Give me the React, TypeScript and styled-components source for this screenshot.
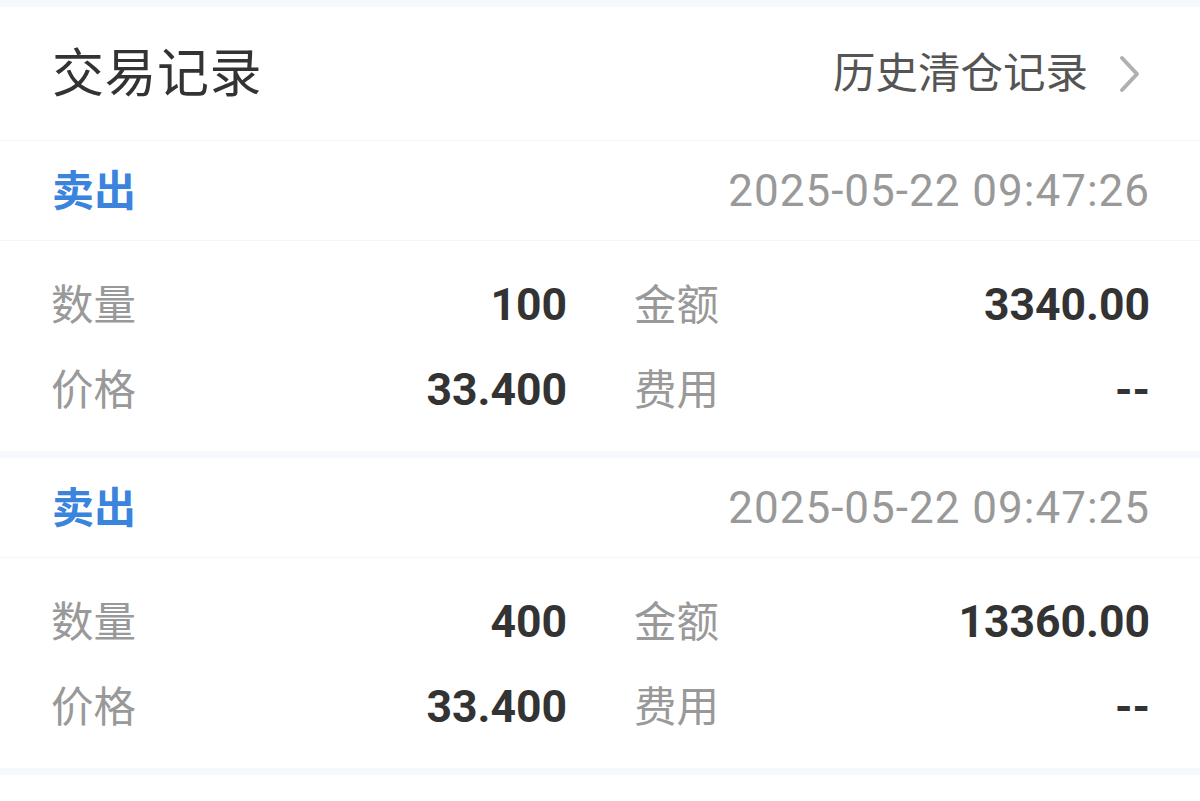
import styled, { createGlobalStyle } from "styled-components";

type Trade = {
  side: string;
  time: string;
  quantity: string;
  amount: string;
  price: string;
  fee: string;
};

const trades: Trade[] = [
  {
    side: "卖出",
    time: "2025-05-22 09:47:26",
    quantity: "100",
    amount: "3340.00",
    price: "33.400",
    fee: "--",
  },
  {
    side: "卖出",
    time: "2025-05-22 09:47:25",
    quantity: "400",
    amount: "13360.00",
    price: "33.400",
    fee: "--",
  },
];

const GlobalStyle = createGlobalStyle`
  html, body {
    margin: 0;
    padding: 0;
    background: #ffffff;
  }
  body {
    font-family: "Noto Sans CJK SC", "Noto Sans", sans-serif;
  }
`;

const Field = ({ label, value }: { label: string; value: string }) => (
  <FieldCell>
    <Label>{label}</Label>
    <Value>{value}</Value>
  </FieldCell>
);

const TradeCard = ({ trade }: { trade: Trade }) => (
  <Card>
    <SideRow>
      <Side>{trade.side}</Side>
      <Time>{trade.time}</Time>
    </SideRow>
    <Details>
      <Field label="数量" value={trade.quantity} />
      <Field label="金额" value={trade.amount} />
      <Field label="价格" value={trade.price} />
      <Field label="费用" value={trade.fee} />
    </Details>
  </Card>
);

const App = () => {
  return (
    <>
      <GlobalStyle />
      <Page>
        <Header>
          <Title>交易记录</Title>
          <HistoryLink>
            <span>历史清仓记录</span>
            <svg width="24" height="38" viewBox="0 0 24 38" fill="none">
              <polyline
                points="4,3 19,19 4,35"
                stroke="#b0b0b0"
                strokeWidth="4"
                strokeLinecap="round"
                strokeLinejoin="round"
              />
            </svg>
          </HistoryLink>
        </Header>
        {trades.map((trade) => (
          <TradeCard key={trade.time} trade={trade} />
        ))}
      </Page>
    </>
  );
};

const Page = styled.div`
  border-top: 7px solid #f5f8fd;
`;

const Header = styled.div`
  height: 133px;
  padding: 0 52px;
  display: flex;
  align-items: center;
  justify-content: space-between;
  border-bottom: 1px solid #f6f6f6;
`;

const Title = styled.div`
  font-size: 52px;
  line-height: 1;
  color: #333333;
  letter-spacing: 0.5px;
  margin-bottom: 8px;
`;

const HistoryLink = styled.div`
  display: flex;
  align-items: center;
  gap: 30px;
  font-size: 42.5px;
  line-height: 1;
  color: #555555;
  margin-right: 6px;

  span {
    margin-bottom: 6px;
  }
`;

const Card = styled.div`
  border-bottom: 7px solid #f5f8fd;
`;

const SideRow = styled.div`
  height: 99px;
  padding: 0 52px;
  display: flex;
  align-items: center;
  justify-content: space-between;
  border-bottom: 1px solid #f6f6f6;
`;

const Side = styled.div`
  font-size: 42px;
  font-weight: 700;
  line-height: 1;
  color: #3a84de;
  margin-bottom: 6px;
`;

const Time = styled.div`
  font-family: Roboto, "Noto Sans", sans-serif;
  font-size: 44px;
  line-height: 1;
  letter-spacing: 1px;
  color: #999999;
  margin-right: -2px;
`;

const Details = styled.div`
  padding: 22px 52px 18px;
  display: grid;
  grid-template-columns: 1fr 1fr;
  column-gap: 70px;
  grid-auto-rows: 85px;
`;

const FieldCell = styled.div`
  display: flex;
  align-items: center;
  justify-content: space-between;
`;

const Label = styled.div`
  font-size: 42.5px;
  line-height: 1;
  color: #999999;
  margin-left: -1px;
  margin-bottom: 7px;
`;

const Value = styled.div`
  font-family: Roboto, "Noto Sans", sans-serif;
  font-size: 44.5px;
  font-weight: 700;
  line-height: 1;
  color: #333333;
  margin-right: -2px;
`;

export default App;
